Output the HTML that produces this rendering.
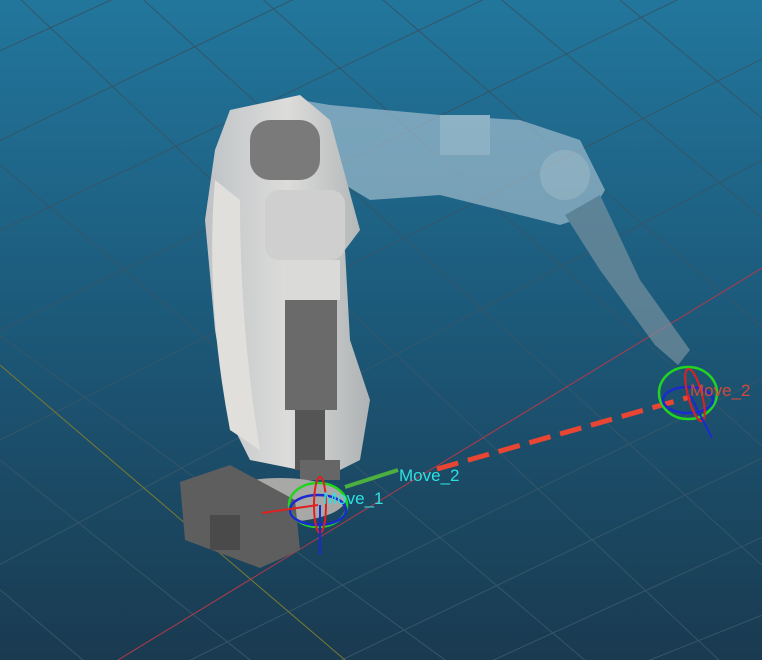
<!DOCTYPE html>
<html><head><meta charset="utf-8"><style>
html,body{margin:0;padding:0;width:762px;height:660px;overflow:hidden}
svg{display:block;overflow:hidden}
</style></head><body>
<svg width="762" height="660" viewBox="0 0 762 660" xmlns="http://www.w3.org/2000/svg">
<defs>
<linearGradient id="bg" x1="0" y1="0" x2="0" y2="1">
<stop offset="0" stop-color="#22769c"/>
<stop offset="0.5" stop-color="#1c5878"/>
<stop offset="1" stop-color="#1a3a50"/>
</linearGradient>
<linearGradient id="body" x1="0" y1="0" x2="1" y2="0">
<stop offset="0" stop-color="#bfc3c6"/>
<stop offset="0.5" stop-color="#dcdcda"/>
<stop offset="1" stop-color="#aeb2b4"/>
</linearGradient>
</defs>
<rect width="762" height="660" fill="url(#bg)"/>
<g stroke="#34566a" stroke-width="1" fill="none">
<line x1="-200" y1="190" x2="500" y2="700"/>
<line x1="-100" y1="80" x2="620" y2="690"/>
<line x1="0" y1="-20" x2="740" y2="680"/>
<line x1="100" y1="-40" x2="800" y2="600"/>
<line x1="230" y1="-30" x2="800" y2="480"/>
<line x1="360" y1="-20" x2="800" y2="360"/>
<line x1="490" y1="-10" x2="800" y2="250"/>
<line x1="620" y1="0" x2="800" y2="150"/>
<line x1="-200" y1="300" x2="300" y2="700"/>
<line x1="-200" y1="420" x2="130" y2="700"/>
<line x1="-20" y1="60" x2="330" y2="-100"/>
<line x1="-20" y1="150" x2="500" y2="-100"/>
<line x1="-20" y1="240" x2="650" y2="-80"/>
<line x1="-20" y1="340" x2="800" y2="-60"/>
<line x1="-20" y1="450" x2="800" y2="40"/>
<line x1="-20" y1="575" x2="800" y2="140"/>
<line x1="150" y1="680" x2="800" y2="360"/>
<line x1="300" y1="680" x2="800" y2="440"/>
<line x1="450" y1="680" x2="800" y2="520"/>
<line x1="600" y1="680" x2="800" y2="600"/>
</g>
<line x1="0" y1="365" x2="345" y2="660" stroke="#7a7a30" stroke-width="1"/>
<line x1="118" y1="660" x2="762" y2="268" stroke="#b03a4a" stroke-width="1"/>
<g opacity="0.65">
<polygon points="300,100 330,105 440,115 520,120 580,140 605,190 590,215 560,225 460,200 440,195 370,200 320,170" fill="#a9c3d3"/>
<polygon points="565,215 600,195 640,280 690,350 678,365 655,345 600,270" fill="#7f95a2"/>
<rect x="440" y="115" width="50" height="40" fill="#c8d8e2"/>
<circle cx="565" cy="175" r="25" fill="#c6d6de"/>
</g>
<polygon points="230,110 300,95 330,120 360,230 345,250 350,340 370,400 360,460 340,470 300,470 250,460 230,420 215,330 205,220 215,150" fill="url(#body)"/>
<path d="M215,180 Q205,300 230,430 L260,450 Q240,330 240,200 Z" fill="#e0dfdb"/>
<rect x="250" y="120" width="70" height="60" rx="20" fill="#7a7a7a"/>
<rect x="265" y="190" width="80" height="70" rx="14" fill="#cfcfcf"/>
<rect x="285" y="260" width="55" height="40" fill="#dadad8"/>
<rect x="285" y="300" width="52" height="110" fill="#6a6a6a"/>
<rect x="295" y="410" width="30" height="60" fill="#555"/>
<rect x="300" y="460" width="40" height="20" fill="#666"/>
<ellipse cx="280" cy="500" rx="65" ry="22" fill="#a8a8a6"/>
<polygon points="180,482 230,465 295,500 300,550 260,568 185,540" fill="#5e5e5e"/>
<rect x="210" y="515" width="30" height="35" fill="#4a4a4a"/>
<line x1="437" y1="469" x2="690" y2="397" stroke="#e84632" stroke-width="5" stroke-dasharray="22,10"/>
<line x1="345" y1="487" x2="398" y2="470" stroke="#4caf3f" stroke-width="4"/>
<ellipse cx="318" cy="505" rx="29" ry="22" fill="none" stroke="#22d422" stroke-width="2.5"/>
<ellipse cx="318" cy="510" rx="28" ry="15" fill="none" stroke="#1a2ad0" stroke-width="2.5"/>
<ellipse cx="320" cy="505" rx="6" ry="28" fill="none" stroke="#e02020" stroke-width="2"/>
<line x1="318" y1="505" x2="262" y2="513" stroke="#e02020" stroke-width="2"/>
<line x1="320" y1="505" x2="320" y2="555" stroke="#1a2ad0" stroke-width="2"/>
<text x="323" y="504" font-family="Liberation Sans, sans-serif" font-size="17" fill="#2ee0e0">Move_1</text>
<text x="399" y="481" font-family="Liberation Sans, sans-serif" font-size="17" fill="#2ee0e0">Move_2</text>
<ellipse cx="688" cy="393" rx="29" ry="26" fill="none" stroke="#22d422" stroke-width="2.5"/>
<ellipse cx="688" cy="400" rx="25" ry="13" fill="none" stroke="#1a2ad0" stroke-width="2.5"/>
<ellipse cx="695" cy="395" rx="7" ry="27" fill="none" stroke="#e02020" stroke-width="2" transform="rotate(-15 695 395)"/>
<line x1="690" y1="395" x2="712" y2="438" stroke="#1a2ad0" stroke-width="2"/>
<text x="690" y="396" font-family="Liberation Sans, sans-serif" font-size="17" fill="#d04a3a">Move_2</text>
</svg>
</body></html>
